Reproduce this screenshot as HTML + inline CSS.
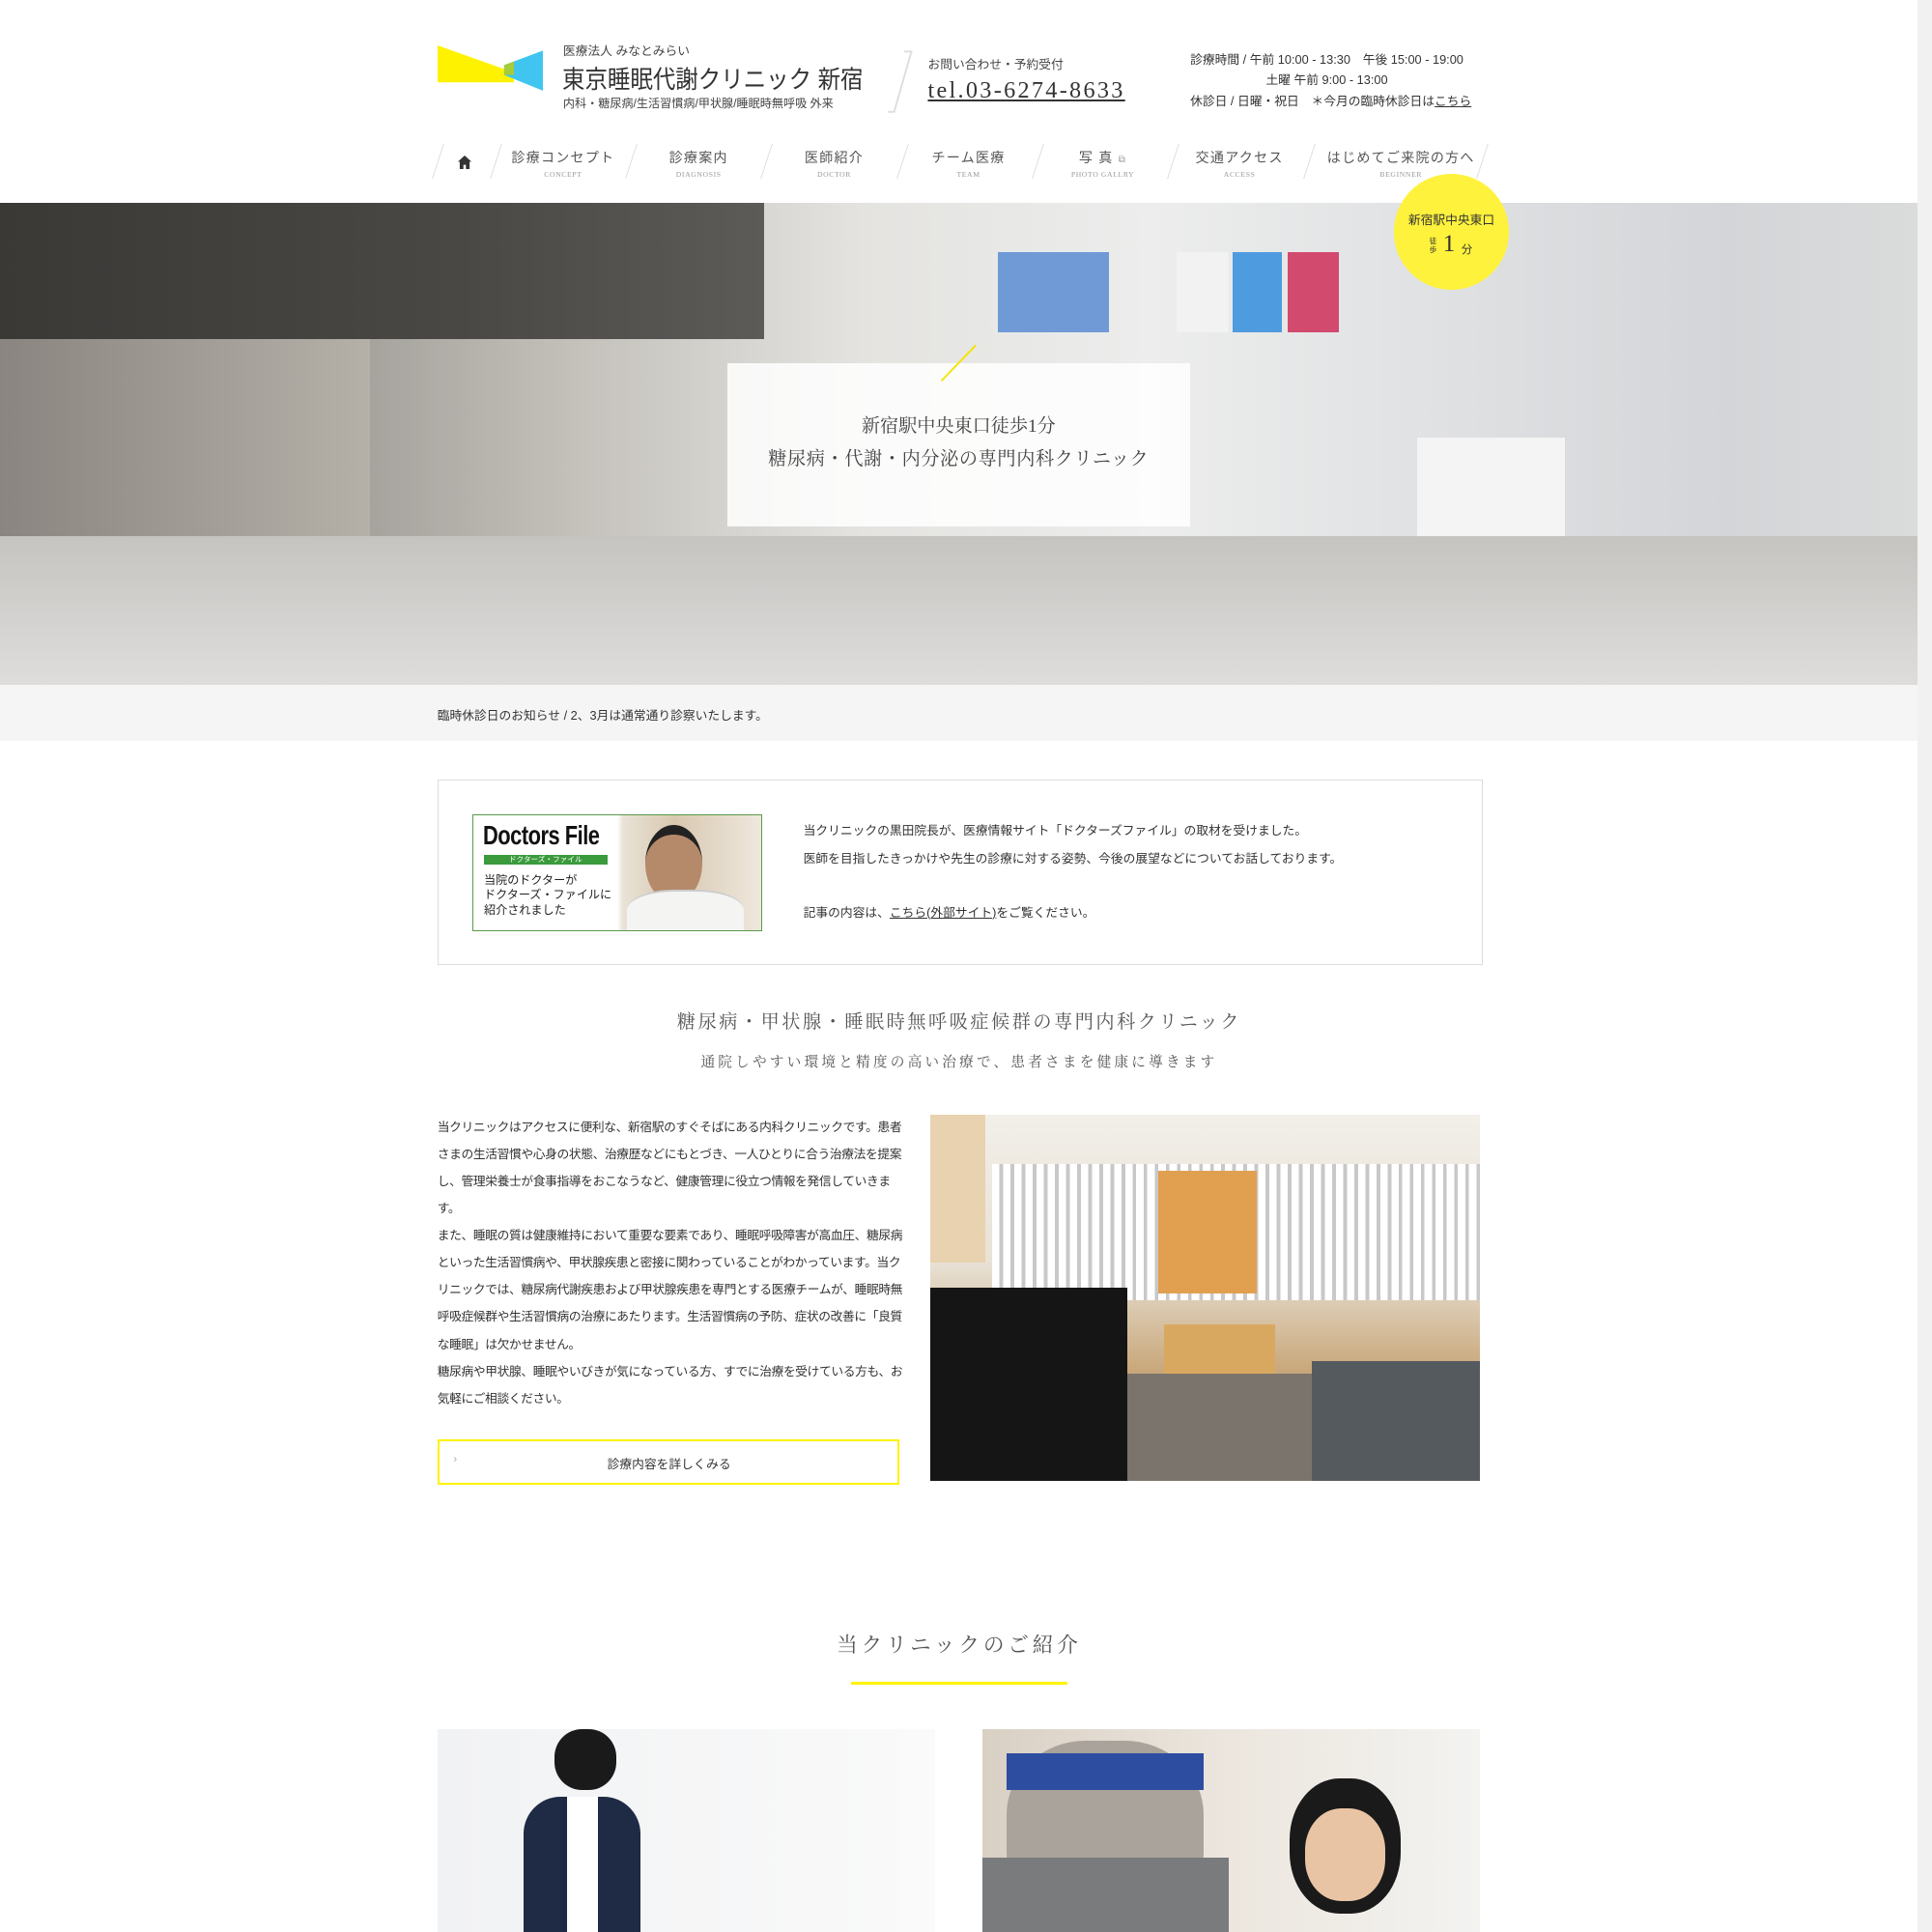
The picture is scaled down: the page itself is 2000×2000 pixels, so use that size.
<!DOCTYPE html>
<html><head><meta charset="utf-8">
<style>
html,body{margin:0;padding:0;background:#fff;}
body{width:1568px;height:1568px;zoom:1.27551;overflow:hidden;position:relative;font-family:"Liberation Sans","Noto Sans CJK JP",sans-serif;color:#333;}
.a{position:absolute;white-space:nowrap;}
.serif{font-family:"Liberation Serif","Noto Serif CJK SC",serif;}
.nav{position:absolute;top:120px;height:30px;text-align:center;font-size:11px;color:#555;letter-spacing:1px;}
.nav small{display:block;font-size:6px;color:#999;letter-spacing:0.5px;margin-top:2px;font-family:"Liberation Serif",serif;}
.sep{position:absolute;top:117px;width:1px;height:28px;background:#ddd;transform:skewX(-18deg);}
p{margin:0}
</style></head><body>
<!-- logo -->
<svg class="a" style="left:355px;top:37px" width="86" height="38" viewBox="0 0 86 38">
<polygon points="0,0 62,22 62,30 0,30" fill="#fff200"/>
<polygon points="54,16 86,4 86,37 54,24" fill="#3fc5f0"/>
<polygon points="54,16 62,13 62,24 54,24" fill="#a6cc3a"/>
</svg>
<div class="a" style="left:457px;top:33px;font-size:10px;color:#444">医療法人 みなとみらい</div>
<div class="a" style="left:456px;top:49px;font-size:20px;color:#333;transform:scaleX(0.92);transform-origin:left">東京睡眠代謝クリニック 新宿</div>
<div class="a" style="left:457px;top:77px;font-size:9.5px;color:#444">内科・糖尿病/生活習慣病/甲状腺/睡眠時無呼吸 外来</div>
<svg class="a" style="left:720px;top:41px" width="22" height="52"><polyline points="14,1 20,1 6,50 1,50" fill="none" stroke="#ddd" stroke-width="1.5"/></svg>
<div class="a" style="left:753px;top:44px;font-size:10px;color:#444">お問い合わせ・予約受付</div>
<div class="a serif" style="left:753px;top:63px;font-size:19px;color:#333;letter-spacing:1.8px;text-decoration:underline">tel.03-6274-8633</div>
<div class="a" style="left:966px;top:41px;font-size:10px;color:#333;line-height:16px;text-align:center">診療時間 / 午前 10:00 - 13:30　午後 15:00 - 19:00<br>土曜 午前 9:00 - 13:00</div>
<div class="a" style="left:966px;top:74px;font-size:10px;color:#333">休診日 / 日曜・祝日　＊今月の臨時休診日は<u>こちら</u></div>
<!-- nav -->
<div class="sep" style="left:355px"></div>
<svg class="a" style="left:372px;top:126px" width="11" height="11"><path d="M5.5 0L11 5H9.5V11H6.5V7.5H4.5V11H1.5V5H0Z" fill="#333"/></svg>
<div class="sep" style="left:402px"></div>
<div class="nav" style="left:404px;width:106px">診療コンセプト<small>CONCEPT</small></div>
<div class="sep" style="left:512px"></div>
<div class="nav" style="left:514px;width:106px">診療案内<small>DIAGNOSIS</small></div>
<div class="sep" style="left:622px"></div>
<div class="nav" style="left:624px;width:106px">医師紹介<small>DOCTOR</small></div>
<div class="sep" style="left:732px"></div>
<div class="nav" style="left:734px;width:104px">チーム医療<small>TEAM</small></div>
<div class="sep" style="left:842px"></div>
<div class="nav" style="left:844px;width:102px">写 真 <span style="font-size:8px;color:#999">⧉</span><small>PHOTO GALLRY</small></div>
<div class="sep" style="left:952px"></div>
<div class="nav" style="left:954px;width:104px">交通アクセス<small>ACCESS</small></div>
<div class="sep" style="left:1062px"></div>
<div class="nav" style="left:1064px;width:146px">はじめてご来院の方へ<small>BEGINNER</small></div>
<div class="sep" style="left:1203px"></div>
<!-- hero -->
<div class="a" style="left:0;top:165px;width:1556px;height:391px;overflow:hidden;background:linear-gradient(90deg,#7a7874 0%,#9a9792 15%,#c4c1bb 30%,#e4e3e0 45%,#ecedec 60%,#e0e1e3 75%,#d3d5d8 90%,#dadbdb 100%)">
 <div class="a" style="left:0;top:0;width:620px;height:110px;background:linear-gradient(90deg,#3b3936,#4a4845 60%,#5d5b58)"></div>
 <div class="a" style="left:0;top:110px;width:300px;height:200px;background:linear-gradient(90deg,#8a8580,#b5b0a8)"></div>
 <div class="a" style="left:0;top:270px;width:1556px;height:121px;background:linear-gradient(180deg,#c5c4c1,#dedddb)"></div>
 <div class="a" style="left:810px;top:40px;width:90px;height:65px;background:#6f9ad6"></div>
 <div class="a" style="left:955px;top:40px;width:42px;height:65px;background:#f2f2f2"></div>
 <div class="a" style="left:1000px;top:40px;width:40px;height:65px;background:#4f9be0"></div>
 <div class="a" style="left:1045px;top:40px;width:42px;height:65px;background:#d24a6e"></div>
 <div class="a" style="left:1150px;top:190px;width:120px;height:80px;background:#f4f4f4"></div>
</div>
<div class="a" style="left:590px;top:295px;width:376px;height:132px;background:rgba(255,255,255,0.85)"></div>
<svg class="a" style="left:762px;top:279px" width="32" height="32"><line x1="30" y1="1" x2="2" y2="30" stroke="#f5e400" stroke-width="1.5"/></svg>
<div class="a serif" style="left:590px;top:333px;width:376px;text-align:center;font-size:15px;color:#444;line-height:27px">新宿駅中央東口徒歩1分<br><span style="letter-spacing:0.5px">糖尿病・代謝・内分泌の専門内科クリニック</span></div>
<div class="a" style="left:1131px;top:141px;width:94px;height:94px;border-radius:50%;background:#fff23c"></div>
<div class="a" style="left:1131px;top:170px;width:94px;text-align:center;font-size:10px;color:#333">新宿駅中央東口</div>
<div class="a" style="left:1160px;top:193px;font-size:6px;line-height:7px;color:#333">徒<br>歩</div>
<div class="a serif" style="left:1171px;top:186px;font-size:20px;color:#333">1</div>
<div class="a" style="left:1186px;top:196px;font-size:9px;color:#333">分</div>
<!-- scrollbar hint -->
<div class="a" style="left:1556px;top:0;width:12px;height:1568px;background:#f1f1f1"></div>
<!-- notice -->
<div class="a" style="left:0;top:556px;width:1556px;height:45px;background:#f5f5f5"></div>
<div class="a" style="left:355px;top:572px;font-size:10px;color:#333">臨時休診日のお知らせ / 2、3月は通常通り診察いたします。</div>
<!-- doctors file box -->
<div class="a" style="left:355px;top:633px;width:847px;height:149px;border:1px solid #ddd"></div>
<div class="a" style="left:383px;top:661px;width:234px;height:93px;border:1px solid #5a9a4a;background:linear-gradient(90deg,#fff 50%,#e9e2d6 52%,#d8c8b0 70%,#efe8de 100%);overflow:hidden">
 <div class="a" style="left:8px;top:4px;font-size:22px;font-weight:bold;color:#111;transform:scaleX(0.78);transform-origin:left;letter-spacing:-0.5px">Doctors File</div>
 <div class="a" style="left:9px;top:32px;width:100px;height:8px;background:#3a9a3c;color:#fff;font-size:6px;line-height:8px;text-align:center">ドクターズ・ファイル</div>
 <div class="a" style="left:9px;top:47px;font-size:9.5px;line-height:12px;color:#222">当院のドクターが<br>ドクターズ・ファイルに<br>紹介されました</div>
 <div class="a" style="left:140px;top:8px;width:46px;height:55px;border-radius:50%;background:#b58a6a;border-top:8px solid #222"></div>
 <div class="a" style="left:125px;top:60px;width:95px;height:40px;border-radius:40% 40% 0 0;background:#f4f4f2;border-top:2px solid #ccc"></div>
</div>
<div class="a" style="left:652px;top:666px;font-size:10px;color:#333">当クリニックの黒田院長が、医療情報サイト「ドクターズファイル」の取材を受けました。</div>
<div class="a" style="left:652px;top:688px;font-size:10px;color:#333">医師を目指したきっかけや先生の診療に対する姿勢、今後の展望などについてお話しております。</div>
<div class="a" style="left:652px;top:732px;font-size:10px;color:#333">記事の内容は、<u>こちら(外部サイト)</u>をご覧ください。</div>
<!-- headings -->
<div class="a serif" style="left:355px;top:818px;width:847px;text-align:center;font-size:15px;color:#555;letter-spacing:2px">糖尿病・甲状腺・睡眠時無呼吸症候群の専門内科クリニック</div>
<div class="a serif" style="left:355px;top:853px;width:847px;text-align:center;font-size:11.5px;color:#555;letter-spacing:2.5px">通院しやすい環境と精度の高い治療で、患者さまを健康に導きます</div>
<!-- paragraph -->
<div class="a" style="left:355px;top:904px;width:380px;white-space:normal;font-size:10px;line-height:22px;color:#333;letter-spacing:-0.3px">当クリニックはアクセスに便利な、新宿駅のすぐそばにある内科クリニックです。患者さまの生活習慣や心身の状態、治療歴などにもとづき、一人ひとりに合う治療法を提案し、管理栄養士が食事指導をおこなうなど、健康管理に役立つ情報を発信していきます。<br>また、睡眠の質は健康維持において重要な要素であり、睡眠呼吸障害が高血圧、糖尿病といった生活習慣病や、甲状腺疾患と密接に関わっていることがわかっています。当クリニックでは、糖尿病代謝疾患および甲状腺疾患を専門とする医療チームが、睡眠時無呼吸症候群や生活習慣病の治療にあたります。生活習慣病の予防、症状の改善に「良質な睡眠」は欠かせません。<br>糖尿病や甲状腺、睡眠やいびきが気になっている方、すでに治療を受けている方も、お気軽にご相談ください。</div>
<div class="a" style="left:355px;top:1168px;width:372px;height:34px;border:2px solid #fff200"></div>
<div class="a" style="left:368px;top:1180px;font-size:9px;color:#aaa">›</div>
<div class="a" style="left:355px;top:1180px;width:376px;text-align:center;font-size:10px;color:#333">診療内容を詳しくみる</div>
<!-- clinic photo -->
<div class="a" style="left:755px;top:905px;width:446px;height:297px;overflow:hidden;background:linear-gradient(180deg,#f2efe9 0%,#e8e2d6 40%,#c9a77a 70%,#6a655f 100%)">
 <div class="a" style="left:50px;top:40px;width:396px;height:110px;background:repeating-linear-gradient(90deg,#fff 0 6px,#c8c8c8 6px 9px)"></div>
 <div class="a" style="left:0;top:0;width:45px;height:120px;background:#e8d2b0"></div>
 <div class="a" style="left:185px;top:45px;width:80px;height:100px;background:#e0a050"></div>
 <div class="a" style="left:0;top:140px;width:160px;height:157px;background:#151515"></div>
 <div class="a" style="left:310px;top:200px;width:136px;height:97px;background:#555a5e"></div>
 <div class="a" style="left:160px;top:210px;width:150px;height:87px;background:#7b746c"></div>
 <div class="a" style="left:190px;top:170px;width:90px;height:40px;background:#d9a860"></div>
</div>
<!-- section title -->
<div class="a serif" style="left:355px;top:1322px;width:847px;text-align:center;font-size:17px;color:#555;letter-spacing:3px">当クリニックのご紹介</div>
<div class="a" style="left:691px;top:1365px;width:175px;height:2px;background:#fff200"></div>
<!-- bottom images -->
<div class="a" style="left:355px;top:1403px;width:404px;height:165px;overflow:hidden;background:linear-gradient(90deg,#f1f2f4,#fafafa)">
 <div class="a" style="left:95px;top:0;width:50px;height:50px;border-radius:45%;background:#1a1a1a"></div>
 <div class="a" style="left:70px;top:55px;width:95px;height:120px;background:#1f2a45;border-radius:30px 30px 0 0"></div>
 <div class="a" style="left:105px;top:55px;width:25px;height:120px;background:#fff"></div>
</div>
<div class="a" style="left:797px;top:1403px;width:404px;height:165px;overflow:hidden;background:linear-gradient(90deg,#d9d0c4 0%,#ece6de 50%,#f3f3f1 100%)">
 <div class="a" style="left:20px;top:10px;width:160px;height:150px;border-radius:40%;background:#a9a39b"></div>
 <div class="a" style="left:20px;top:20px;width:160px;height:30px;background:#2d4da0"></div>
 <div class="a" style="left:0;top:105px;width:200px;height:70px;background:#7a7b7d"></div>
 <div class="a" style="left:250px;top:40px;width:90px;height:110px;border-radius:45%;background:#1a1a1a"></div>
 <div class="a" style="left:262px;top:65px;width:65px;height:75px;border-radius:45%;background:#e8c4a4"></div>
</div>
</body></html>
